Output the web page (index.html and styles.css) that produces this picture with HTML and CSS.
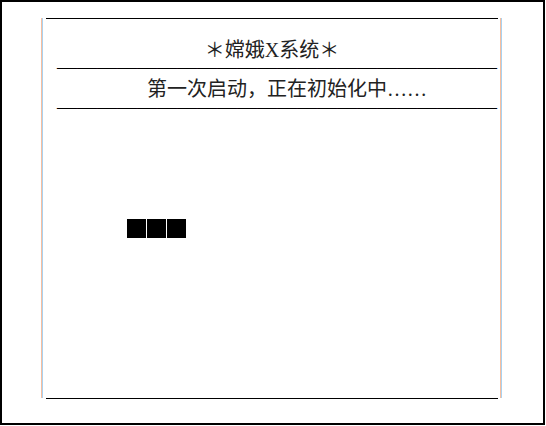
FILE: index.html
```html
<!DOCTYPE html>
<html lang="zh-CN">
<head>
<meta charset="utf-8">
<title>嫦娥X系统</title>
<link rel="stylesheet" href="styles.css">
</head>
<body>
<div class="screen">
  <div class="frame">
    <div class="panel">
      <div class="title">＊嫦娥X系统＊</div>
      <div class="rule">——————————————————————</div>
      <div class="status">第一次启动，正在初始化中……</div>
      <div class="rule">——————————————————————</div>
      <div class="progress">
        <span class="block"></span><span class="block"></span><span class="block"></span>
      </div>
    </div>
  </div>
</div>
</body>
</html>
```

FILE: styles.css
```css
html, body {
  margin: 0;
  padding: 0;
  background: #ffffff;
}

.screen {
  box-sizing: border-box;
  width: 545px;
  height: 425px;
  border: 2px solid #000000;
  padding: 17px 0 0 39px;
  font-family: "Liberation Serif", "Noto Sans CJK SC", serif;
  font-size: 20px;
  line-height: 20px;
  color: #222222;
}

.frame {
  box-sizing: border-box;
  width: 461px;
  height: 380px;
  border-left: 1px solid #f6bea0;
  border-right: 1px solid #a9d2f0;
  box-shadow: inset 1px 0 #a9d2f0, inset -1px 0 #f6bea0;
  padding: 0 3px 0 4px;
}

.panel {
  box-sizing: border-box;
  height: 381px;
  margin-top: -1px;
  border-top: 1px solid #000000;
  border-bottom: 1px solid #000000;
  padding-top: 21px;
}

.title {
  text-align: center;
}

.rule {
  line-height: 14px;
  padding: 0 0 5px 11px;
  white-space: nowrap;
  color: #000000;
  font-family: "Liberation Serif", serif;
}

.status {
  padding: 0 0 1px 101px;
  white-space: nowrap;
}

.progress {
  display: flex;
  gap: 1px;
  margin: 100px 0 0 81px;
}

.block {
  width: 19px;
  height: 19px;
  background: #000000;
}
```
